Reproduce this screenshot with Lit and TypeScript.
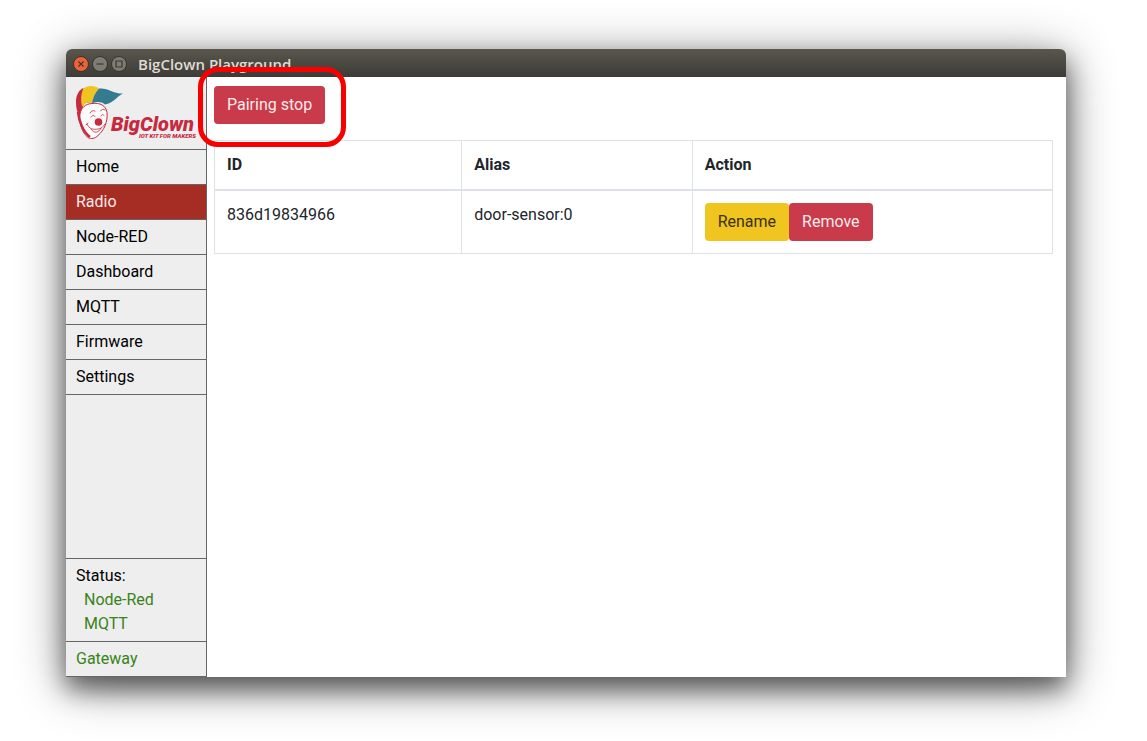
import { LitElement, html, css, svg } from "lit";
import { customElement, property, state } from "lit/decorators.js";

const PAGES = ["Home", "Radio", "Node-RED", "Dashboard", "MQTT", "Firmware", "Settings"];

@customElement("brand-logo")
class BrandLogo extends LitElement {
  static styles = css`
    :host { display: block; }
    svg { display: block; overflow: visible; }
    .name { font: italic 900 20px Roboto, sans-serif; fill: #c62a40; }
    .tagline { font: italic 900 6px Roboto, sans-serif; fill: #c62a40; }
  `;
  render() {
    return html`<svg width="120" height="54" viewBox="0 0 120 54" role="img" aria-label="BigClown">
      ${svg`
        <path d="M7 2C2 5 0 10 0 16c0 6 1 10 4 15l4-14 9-1Z" fill="#c62a40"/>
        <path d="M16 17.500c8-1 14 2 15 9 1 9-3 18-9 23-3 3-7 4-10 2C6 47 3 37 4 28c1-6 5-10 12-10.500Z" fill="#fafafa" stroke="#c62a40" stroke-width="1"/>
        <path d="M2 26c1 9 5 20 12 25" fill="none" stroke="#c62a40" stroke-width="2.500"/>
        <path d="M7 3C11-0.500 17-1 23 2.500c-4 4-6 9-6 14-4-1-8 0-11 4C4.500 14 5 8 7 3Z" fill="#efc41f"/>
        <path d="M23 2.500c9-1 13 5 24 5-6 3-10 10-18 11-4-3-8-3-13-1 1-6 3-11 7-15Z" fill="#357b8f"/>
        <circle cx="22.500" cy="36" r="3.800" fill="#c62a40"/>
        <path d="M14 27c1-2 3-3 5-2M24.500 25c1-2 3-2 4.500-1M15 31c1-2 3-2 4-.5M25 30c1-2 2-2 3-.5M11 38c2 5 6 6 11 5 3 0 5-2 7-5M10 39l2-2M15 43c3 5 8 4 10-1" fill="none" stroke="#c62a40" stroke-width=".8" stroke-linecap="round"/>
        <text class="name" x="35" y="45">BigClown</text>
        <text class="tagline" x="63" y="52">IOT KIT FOR MAKERS</text>
      `}
    </svg>`;
  }
}

@customElement("title-bar")
class TitleBar extends LitElement {
  @property() heading = "";
  static styles = css`
    :host {
      display: flex; align-items: center; gap: 3px; height: 28px; padding: 1px 0 0 7px;
      box-sizing: border-box; border-radius: 6px 6px 0 0;
      background: linear-gradient(#59574d, #3c3b37);
    }
    button { width: 16px; height: 16px; padding: 0; border: 0; background: none; }
    svg { display: block; }
    h1 { margin: 0 0 0 8px; font: 600 15px/28px "Open Sans", sans-serif; color: #dfdbd2; }
  `;
  control(label: string, fill: string, glyph: string) {
    return html`<button aria-label=${label}>
      <svg width="16" height="16" viewBox="0 0 16 16">
        <circle cx="8" cy="8" r="7.5" fill=${fill} stroke="#35342f"/>
        <path d=${glyph} fill="none" stroke="#3a3833" stroke-width="1.2"/>
      </svg>
    </button>`;
  }
  render() {
    return html`
      ${this.control("Close", "#ee6238", "M5.5 5.5l5 5M10.5 5.5l-5 5")}
      ${this.control("Minimize", "#7e7c73", "M4.5 8h7")}
      ${this.control("Maximize", "#7e7c73", "M5 5h6v6H5z")}
      <h1>${this.heading}</h1>`;
  }
}

@customElement("side-bar")
class SideBar extends LitElement {
  @state() current = "Radio";
  static styles = css`
    :host {
      display: flex; flex-direction: column; flex: 0 0 141px; box-sizing: border-box;
      border-right: 1px solid #666; border-bottom: 1px solid #666;
      background: #eee; color: #000;
    }
    brand-logo { padding: 9px 10px; }
    nav { display: flex; flex-direction: column; border-top: 1px solid #666; }
    a {
      padding: 5px 10px; border-bottom: 1px solid #666;
      color: inherit; text-decoration: none;
    }
    a.current { background: #a62d24; color: #f6e9e7; }
    .status { margin-top: auto; }
    .status, .gateway { padding: 5px 10px; border-top: 1px solid #666; }
    ul { margin: 0; padding: 0 8px; list-style: none; }
    li, .gateway { color: #38831a; }
  `;
  render() {
    return html`
      <brand-logo></brand-logo>
      <nav>
        ${PAGES.map((p) => html`<a href="#${p}" class=${p === this.current ? "current" : ""}
          @click=${() => (this.current = p)}>${p}</a>`)}
      </nav>
      <div class="status">Status:
        <ul><li>Node-Red</li><li>MQTT</li></ul>
      </div>
      <div class="gateway">Gateway</div>`;
  }
}

@customElement("radio-page")
class RadioPage extends LitElement {
  @state() nodes = [{ id: "836d19834966", alias: "door-sensor:0" }];
  static styles = css`
    :host { display: block; flex: 1; min-width: 0; padding: 9px 13px 0 7px; background: #fff; color: #212529; }
    .toolbar { position: relative; width: fit-content; display: flex; margin-bottom: 16px; }
    .highlight {
      position: absolute; inset: -19px -21px -23px -16px;
      border: 5px solid #f90000; border-radius: 20px; pointer-events: none;
    }
    button { padding: 7px 13px; border: 0; border-radius: 4px; font: inherit; }
    .danger { background: #c93a4a; color: #fbeaec; }
    .warning { background: #f0c520; color: #3c3110; }
    table { width: 100%; border-collapse: collapse; table-layout: fixed; }
    th, td { box-sizing: border-box; padding: 12px; border: 1px solid #dee2e6; text-align: left; vertical-align: top; }
    th { border-bottom-width: 2px; font-weight: bold; }
    .id { width: 29.5%; }
    .alias { width: 27.5%; }
    .actions { display: flex; }
  `;
  render() {
    return html`
      <div class="toolbar">
        <button class="danger">Pairing stop</button>
        <div class="highlight"></div>
      </div>
      <table>
        <colgroup><col class="id"><col class="alias"><col></colgroup>
        <thead><tr><th>ID</th><th>Alias</th><th>Action</th></tr></thead>
        <tbody>
          ${this.nodes.map((n) => html`<tr>
            <td>${n.id}</td><td>${n.alias}</td>
            <td><div class="actions"><button class="warning">Rename</button><button class="danger">Remove</button></div></td>
          </tr>`)}
        </tbody>
      </table>`;
  }
}

@customElement("app-root")
class AppRoot extends LitElement {
  static styles = css`
    :host {
      display: flex; box-sizing: border-box; min-height: 100vh; padding: 49px 81px 64px 66px;
      background: #fff; font: 16px/24px Roboto, sans-serif;
    }
    .window {
      flex: 1; min-width: 0; display: flex; flex-direction: column;
      border-radius: 6px 6px 0 0;
      box-shadow: 0 12px 24px rgba(0, 0, 0, 0.5), 0 8px 50px rgba(0, 0, 0, 0.45);
    }
    .body { flex: 1; display: flex; }
  `;
  render() {
    return html`<div class="window">
      <title-bar heading="BigClown Playground"></title-bar>
      <div class="body"><side-bar></side-bar><radio-page></radio-page></div>
    </div>`;
  }
}
